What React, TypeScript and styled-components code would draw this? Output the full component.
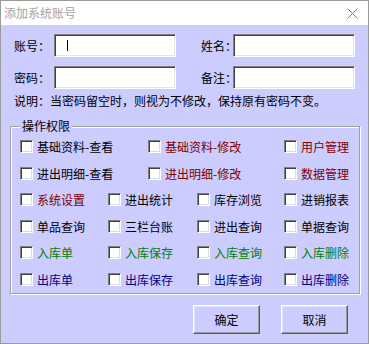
import React from "react";
import styled, { createGlobalStyle } from "styled-components";

const GlobalStyle = createGlobalStyle`
  html, body {
    margin: 0;
    padding: 0;
  }
  body {
    font-family: "Noto Sans CJK SC", "Noto Sans", sans-serif;
    font-size: 12px;
    color: #000;
    background: #ccccff;
  }
  * { box-sizing: border-box; }
`;

const Window = styled.div`
  width: 369px;
  height: 344px;
  border: 1px solid #9a9a9a;
  background: #ccccff;
  display: flex;
  flex-direction: column;
`;

const TitleBar = styled.div`
  height: 24px;
  flex: none;
  background: #ffffff;
  display: flex;
  align-items: center;
  justify-content: space-between;
  padding: 0 10px 0 3px;
  color: #a3a3a3;
  font-size: 12px;
  line-height: 14px;
`;

const CloseIcon = styled.svg`
  width: 11px;
  height: 11px;
  display: block;
`;

const Body = styled.div`
  display: flex;
  flex-direction: column;
  padding: 9px 8px 0 9px;
`;

const FieldRow = styled.div`
  display: flex;
  align-items: center;
  height: 23px;
  margin: 0 0 9px 4px;
`;

const Label = styled.span<{ $w: number; $ml?: number }>`
  width: ${(p) => p.$w}px;
  margin-left: ${(p) => p.$ml ?? 0}px;
  flex: none;
  white-space: nowrap;
  line-height: 14px;
`;

const TextBox = styled.div`
  width: 122px;
  height: 23px;
  flex: none;
  background: #ffffff;
  border: 1px solid;
  border-color: #808080 #ffffff #ffffff #808080;
  box-shadow: inset 1px 1px 0 #404040, inset -1px -1px 0 #e4e4e4;
  display: flex;
  align-items: center;
  padding-left: 12px;
`;

const Caret = styled.span`
  width: 1px;
  height: 11px;
  margin-top: -1px;
  background: #000;
`;

const Note = styled.div`
  margin: -4px 0 0 4px;
  line-height: 14px;
  white-space: nowrap;
`;

const Group = styled.fieldset`
  margin: 11px 0 0 0;
  padding: 7px 0 7px 9px;
  border: 1px solid #a0a0a0;
  box-shadow: inset 1px 1px 0 #ffffff, 1px 1px 0 #ffffff;
  display: flex;
  flex-direction: column;
  gap: 13.6px;
  min-width: 0;
`;

const Legend = styled.legend`
  margin: 0;
  padding: 0 2px;
  line-height: 14px;
  background: #ccccff;
`;

const CheckRow = styled.div<{ $cols: string }>`
  display: grid;
  grid-template-columns: ${(p) => p.$cols};
  height: 13px;
`;

const CheckItem = styled.label<{ $color: string }>`
  display: flex;
  align-items: center;
  gap: 4px;
  height: 13px;
  line-height: 13px;
  color: ${(p) => p.$color};
  white-space: nowrap;
`;

const Box = styled.span`
  width: 13px;
  height: 13px;
  flex: none;
  background: #ffffff;
  border: 1px solid;
  border-color: #808080 #ffffff #ffffff #808080;
  box-shadow: inset 1px 1px 0 #404040, inset -1px -1px 0 #dcdcdc;
`;

const ButtonRow = styled.div`
  display: flex;
  justify-content: flex-end;
  gap: 21px;
  margin-top: 11px;
  padding-right: 12px;
`;

const Button = styled.button`
  width: 67px;
  height: 29px;
  padding: 0;
  background: #ccccff;
  border: 1px solid;
  border-color: #ffffff #5a5a5a #5a5a5a #ffffff;
  box-shadow: inset -1px -1px 0 #9a9a9a, inset 1px 1px 0 #e6e6ff;
  font-family: "Noto Sans CJK SC", "Noto Sans", sans-serif;
  font-size: 12px;
  color: #000;
`;

const RED = "#800000";
const GREEN = "#008000";
const NAVY = "#000080";
const BLACK = "#000000";

type Item = [string, string];

const rows: { cols: string; items: Item[] }[] = [
  {
    cols: "128px 136px 1fr",
    items: [
      ["基础资料-查看", BLACK],
      ["基础资料-修改", RED],
      ["用户管理", RED],
    ],
  },
  {
    cols: "128px 136px 1fr",
    items: [
      ["进出明细-查看", BLACK],
      ["进出明细-修改", RED],
      ["数据管理", RED],
    ],
  },
  {
    cols: "88px 89px 87px 1fr",
    items: [
      ["系统设置", RED],
      ["进出统计", BLACK],
      ["库存浏览", BLACK],
      ["进销报表", BLACK],
    ],
  },
  {
    cols: "88px 89px 87px 1fr",
    items: [
      ["单品查询", BLACK],
      ["三栏台账", BLACK],
      ["进出查询", BLACK],
      ["单据查询", BLACK],
    ],
  },
  {
    cols: "88px 89px 87px 1fr",
    items: [
      ["入库单", GREEN],
      ["入库保存", GREEN],
      ["入库查询", GREEN],
      ["入库删除", GREEN],
    ],
  },
  {
    cols: "88px 89px 87px 1fr",
    items: [
      ["出库单", NAVY],
      ["出库保存", NAVY],
      ["出库查询", NAVY],
      ["出库删除", NAVY],
    ],
  },
];

export default function App() {
  return (
    <>
      <GlobalStyle />
      <Window>
        <TitleBar>
          <span>添加系统账号</span>
          <CloseIcon viewBox="0 0 11 11">
            <path d="M0.5 0.5 L10.5 10.5 M10.5 0.5 L0.5 10.5" stroke="#7a7a7a" strokeWidth="1" fill="none" />
          </CloseIcon>
        </TitleBar>
        <Body>
          <FieldRow>
            <Label $w={40}>账号：</Label>
            <TextBox>
              <Caret />
            </TextBox>
            <Label $w={32} $ml={25}>姓名：</Label>
            <TextBox />
          </FieldRow>
          <FieldRow>
            <Label $w={40}>密码：</Label>
            <TextBox />
            <Label $w={32} $ml={25}>备注：</Label>
            <TextBox />
          </FieldRow>
          <Note>说明：当密码留空时，则视为不修改，保持原有密码不变。</Note>
          <Group>
            <Legend>操作权限</Legend>
            {rows.map((row, i) => (
              <CheckRow key={i} $cols={row.cols}>
                {row.items.map(([text, color]) => (
                  <CheckItem key={text} $color={color}>
                    <Box />
                    <span>{text}</span>
                  </CheckItem>
                ))}
              </CheckRow>
            ))}
          </Group>
          <ButtonRow>
            <Button>确定</Button>
            <Button>取消</Button>
          </ButtonRow>
        </Body>
      </Window>
    </>
  );
}
